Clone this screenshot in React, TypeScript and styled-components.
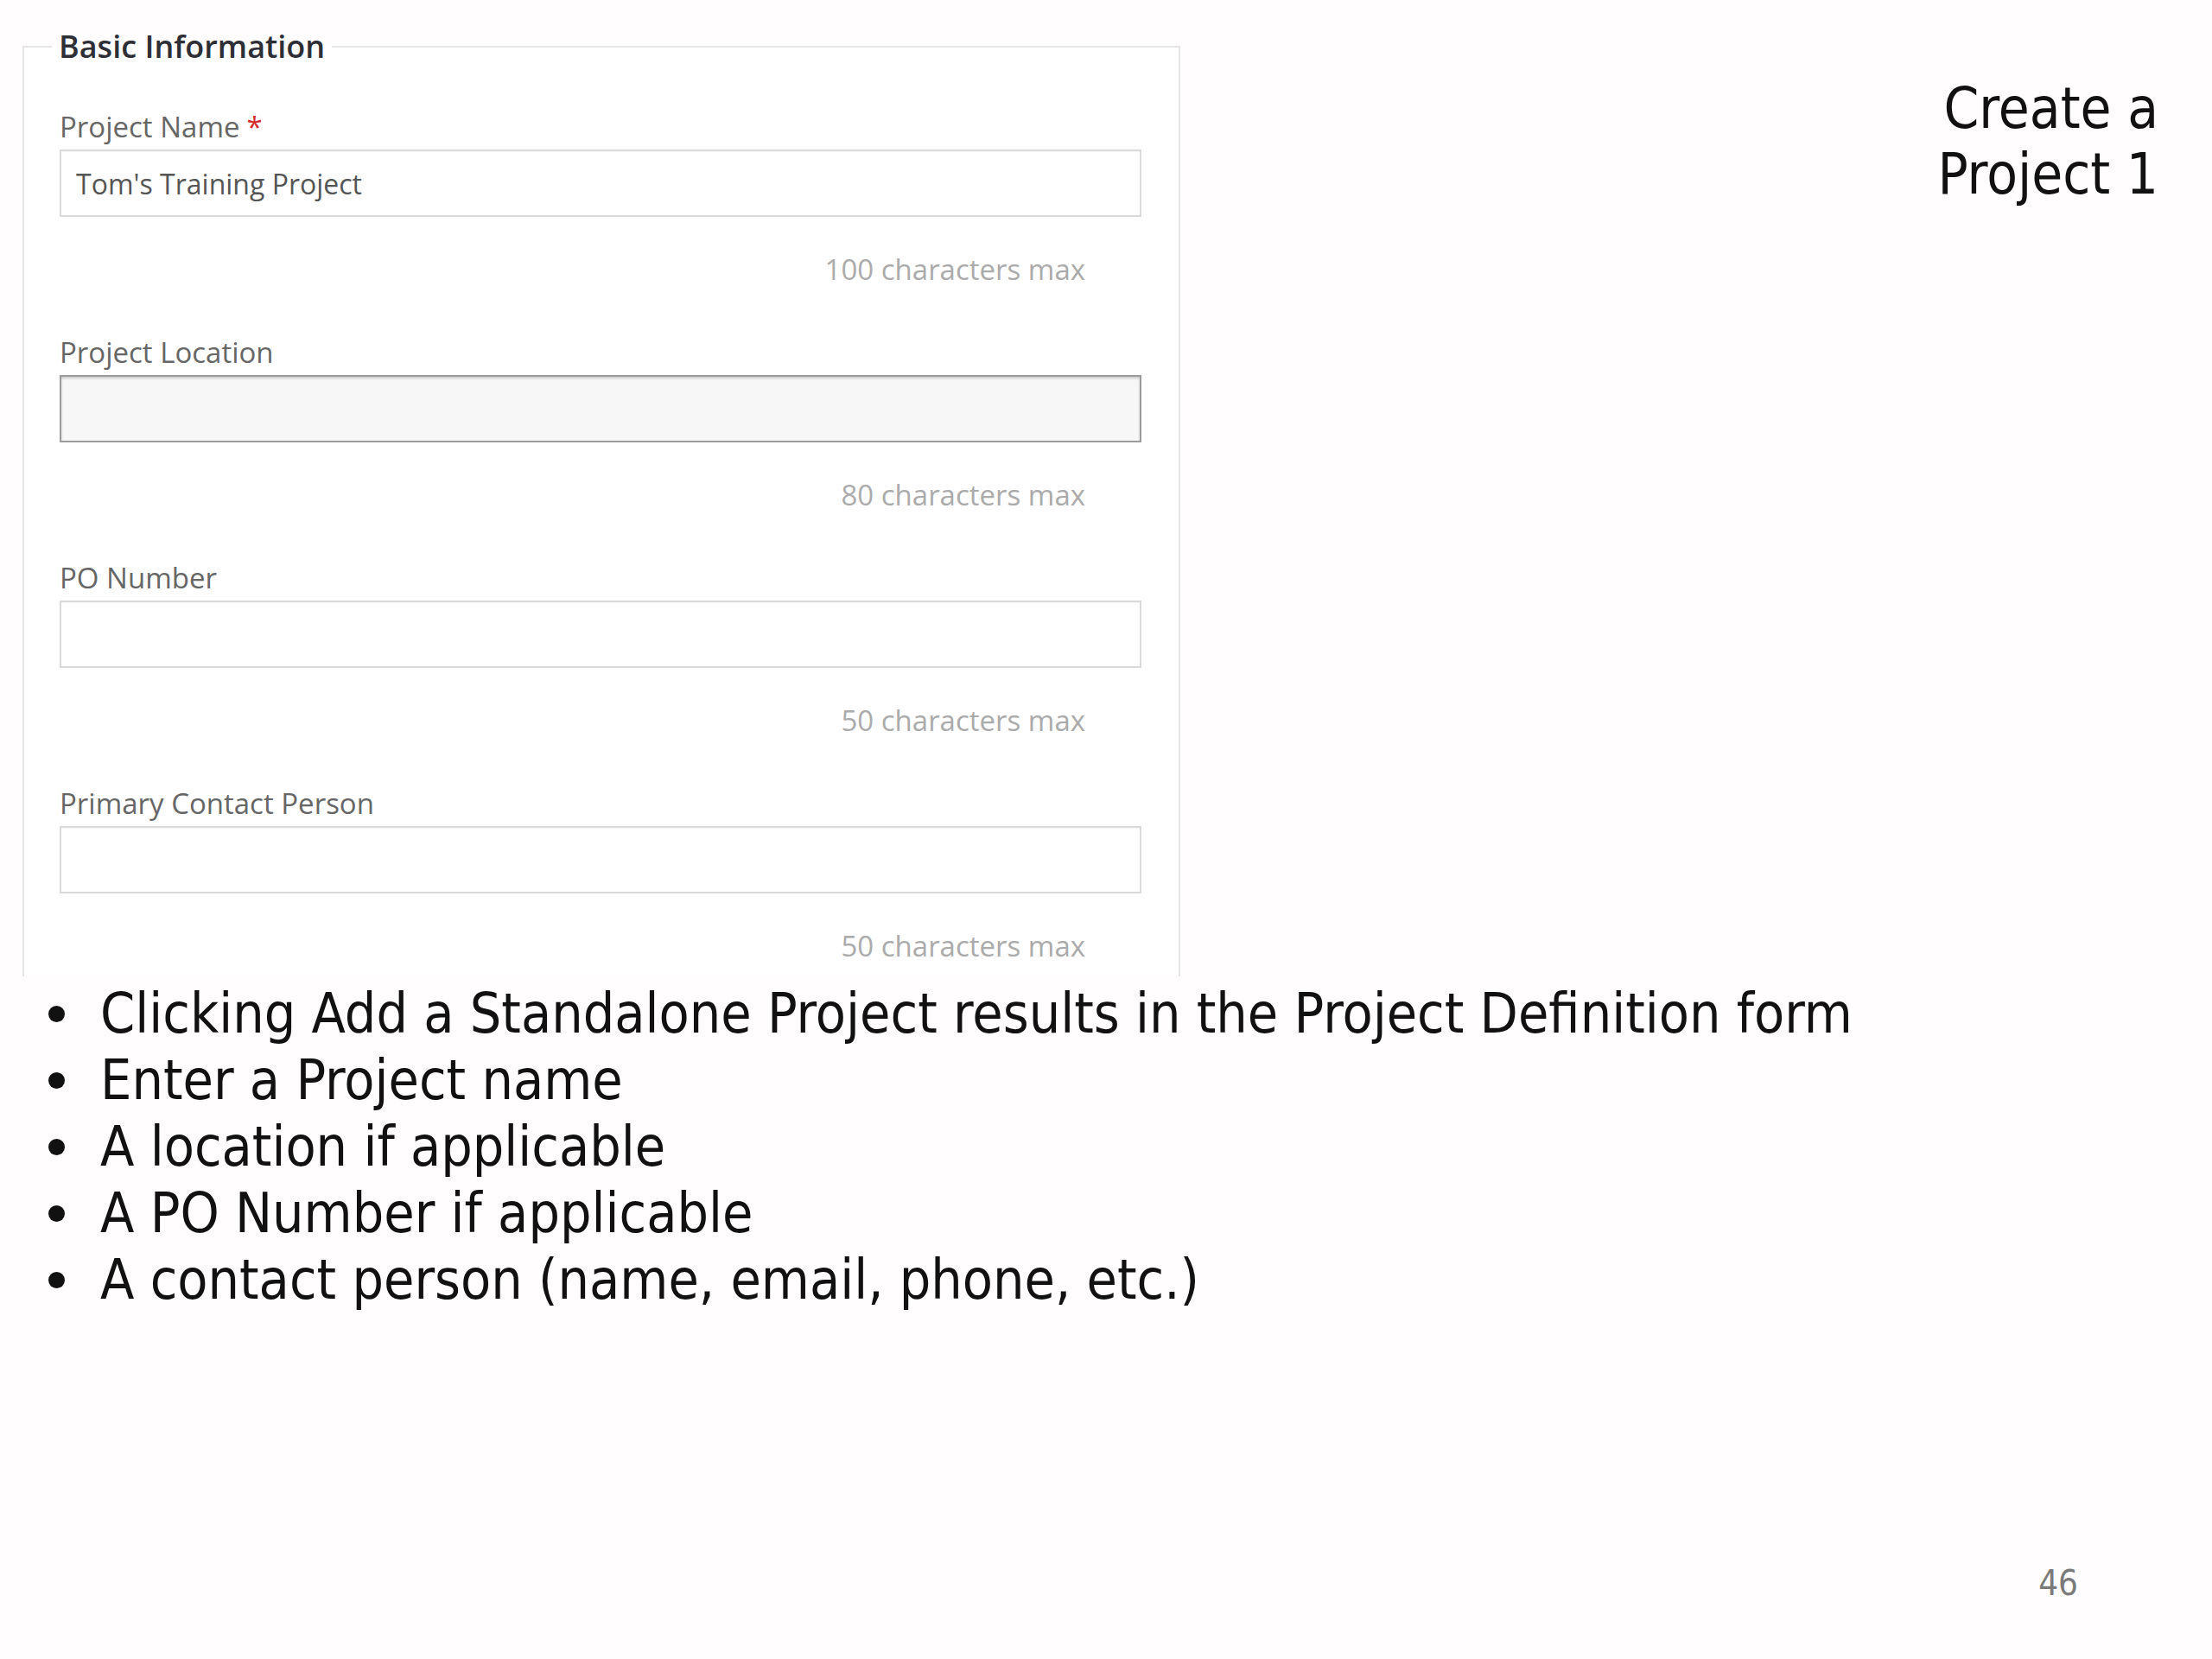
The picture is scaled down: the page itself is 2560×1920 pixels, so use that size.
import React from 'react';
import styled, { createGlobalStyle } from 'styled-components';

const GlobalStyle = createGlobalStyle`
  html, body {
    margin: 0;
    padding: 0;
    background: #fffdfe;
  }
`;

const Slide = styled.div`
  width: 2560px;
  min-height: 1920px;
  display: flex;
  flex-direction: column;
  box-sizing: border-box;
  background: #fffdfe;
`;

const TopRow = styled.div`
  display: flex;
  justify-content: space-between;
  align-items: flex-start;
`;

const FormPanel = styled.fieldset`
  box-sizing: border-box;
  width: 1340px;
  margin: 31px 0 0 26px;
  padding: 47px 43px 12px 41px;
  border: 2px solid #e6e6e6;
  border-bottom: none;
  background: #ffffff;
  min-inline-size: 0;
`;

const Legend = styled.legend`
  padding: 0 8px;
  margin-left: -9px;
  font-family: 'Open Sans', sans-serif;
  font-size: 36px;
  font-weight: 600;
  line-height: 46px;
  color: #2e2e36;
`;

const Field = styled.div`
  display: flex;
  flex-direction: column;
  margin-bottom: 50px;

  &:last-child {
    margin-bottom: 0;
  }
`;

const Label = styled.label`
  font-family: 'Open Sans', sans-serif;
  font-size: 33px;
  line-height: 46px;
  color: #666;
  margin-bottom: 3px;
`;

const Required = styled.span`
  color: #d42a2a;
  margin-left: 8px;
`;

const TextInput = styled.input<{ $focused?: boolean }>`
  box-sizing: border-box;
  width: 100%;
  height: 78px;
  padding: 0 17px;
  border: 2px solid ${({ $focused }) => ($focused ? '#9b9b9b' : '#dadada')};
  border-radius: 0;
  background: ${({ $focused }) => ($focused ? '#f7f7f7' : '#ffffff')};
  box-shadow: ${({ $focused }) =>
    $focused ? 'inset 0 2px 3px rgba(0, 0, 0, 0.18)' : 'inset 0 1px 1px rgba(0, 0, 0, 0.04)'};
  font-family: 'Open Sans', sans-serif;
  font-size: 32px;
  color: #555;
  outline: none;
`;

const Hint = styled.div`
  align-self: flex-end;
  margin: 38px 65px 0 0;
  font-family: 'Open Sans', sans-serif;
  font-size: 33px;
  line-height: 46px;
  color: #ababab;
`;

const Title = styled.h1`
  margin: 88px 62px 0 0;
  font-family: 'DejaVu Sans Condensed', 'DejaVu Sans', sans-serif;
  font-stretch: semi-condensed;
  font-size: 65px;
  font-weight: 400;
  line-height: 76px;
  text-align: right;
  color: #111;
`;

const BulletList = styled.ul`
  list-style: none;
  margin: 5px 0 0 0;
  padding: 0 0 0 56px;
`;

const BulletItem = styled.li`
  display: flex;
  align-items: center;
  font-family: 'DejaVu Sans Condensed', 'DejaVu Sans', sans-serif;
  font-stretch: semi-condensed;
  font-size: 64px;
  line-height: 77px;
  color: #111;
`;

const Dot = styled.span`
  width: 60px;
  flex-shrink: 0;
  display: flex;
  align-items: center;

  &::before {
    content: '';
    width: 19px;
    height: 19px;
    border-radius: 50%;
    background: #111;
  }
`;

const PageNumber = styled.div`
  margin-top: auto;
  align-self: flex-end;
  padding: 0 155px 63px 0;
  font-family: 'DejaVu Sans Condensed', 'DejaVu Sans', sans-serif;
  font-size: 40px;
  line-height: 50px;
  color: #7a7a7a;
`;

const fields = [
  { label: 'Project Name', required: true, value: "Tom's Training Project", max: 100 },
  { label: 'Project Location', focused: true, max: 80 },
  { label: 'PO Number', max: 50 },
  { label: 'Primary Contact Person', max: 50 },
];

const bullets = [
  'Clicking Add a Standalone Project results in the Project Definition form',
  'Enter a Project name',
  'A location if applicable',
  'A PO Number if applicable',
  'A contact person (name, email, phone, etc.)',
];

export default function App() {
  return (
    <>
      <GlobalStyle />
      <Slide>
        <TopRow>
          <FormPanel>
            <Legend>Basic Information</Legend>
            {fields.map((f) => (
              <Field key={f.label}>
                <Label>
                  {f.label}
                  {f.required && <Required>*</Required>}
                </Label>
                <TextInput readOnly defaultValue={f.value ?? ''} $focused={f.focused} />
                <Hint>{f.max} characters max</Hint>
              </Field>
            ))}
          </FormPanel>
          <Title>
            Create a
            <br />
            Project 1
          </Title>
        </TopRow>
        <BulletList>
          {bullets.map((b) => (
            <BulletItem key={b}>
              <Dot />
              <span>{b}</span>
            </BulletItem>
          ))}
        </BulletList>
        <PageNumber>46</PageNumber>
      </Slide>
    </>
  );
}
